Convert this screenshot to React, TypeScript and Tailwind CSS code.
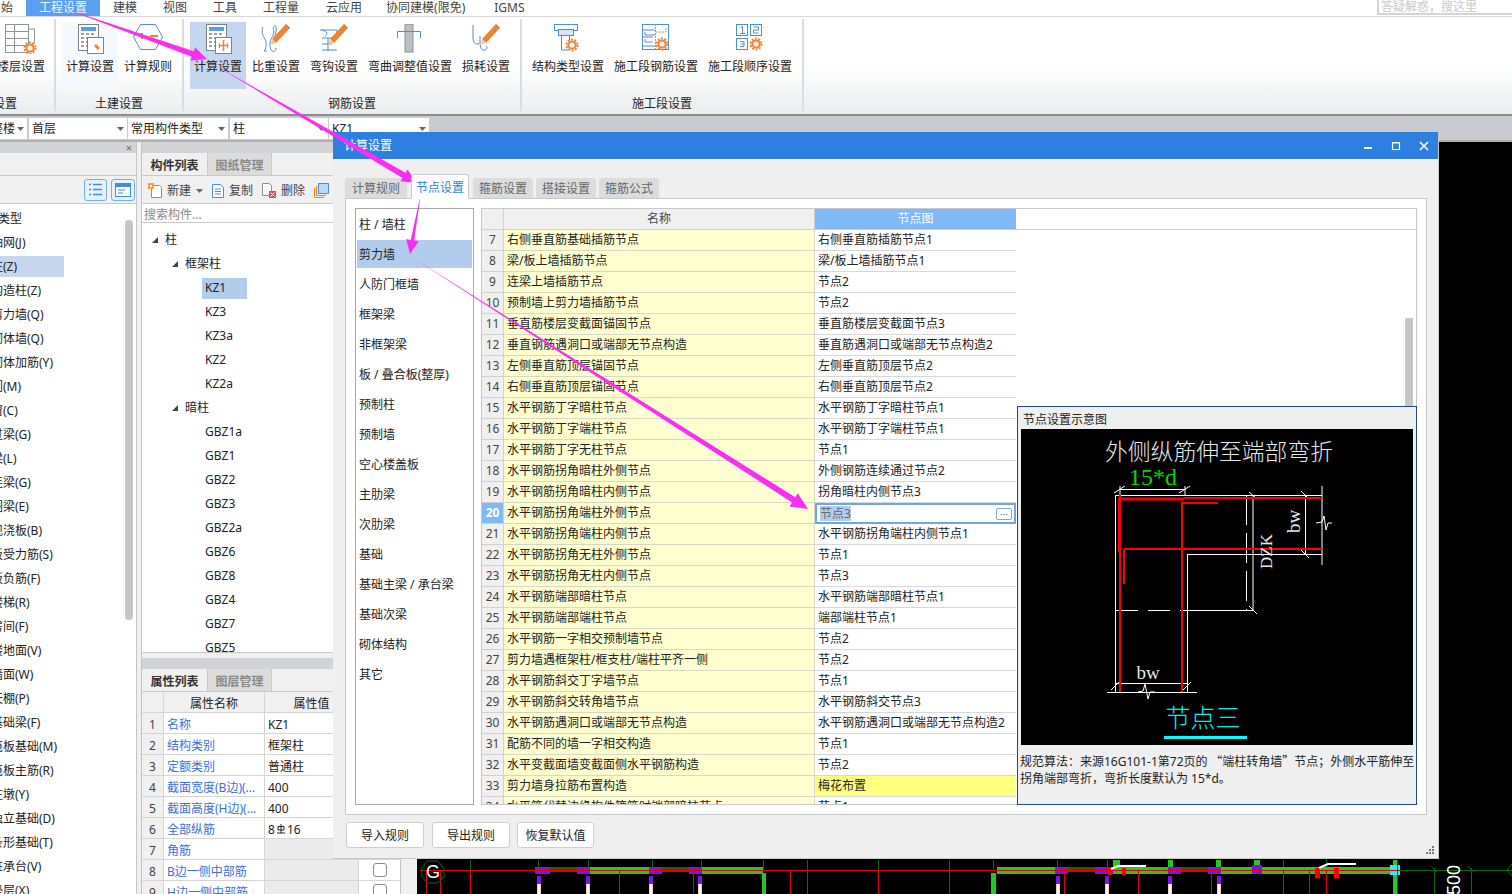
import type { ReactNode } from "react";

const MENU = [
  { label: "工程设置", className: "ml-[13px] w-[74px] justify-center bg-[#5a9ff0] text-[#eef5ff]" },
  { label: "建模", className: "ml-[13px]" },
  { label: "视图", className: "ml-[26px]" },
  { label: "工具", className: "ml-[26px]" },
  { label: "工程量", className: "ml-[26px]" },
  { label: "云应用", className: "ml-[27px]" },
  { label: "协同建模(限免)", className: "ml-[24px]" },
  { label: "IGMS", className: "ml-[29px]" },
];

const LEFT_ITEMS = [
  "轴网(J)", "柱(Z)", "构造柱(Z)", "剪力墙(Q)", "砌体墙(Q)", "砌体加筋(Y)", "门(M)", "窗(C)", "过梁(G)", "梁(L)",
  "连梁(G)", "圈梁(E)", "现浇板(B)", "板受力筋(S)", "板负筋(F)", "楼梯(R)", "房间(F)", "楼地面(V)", "墙面(W)", "天棚(P)",
  "基础梁(F)", "筏板基础(M)", "筏板主筋(R)", "柱墩(Y)", "独立基础(D)", "条形基础(T)", "桩承台(V)", "垫层(X)",
];

const TREE_A = ["KZ1", "KZ3", "KZ3a", "KZ2", "KZ2a"];
const TREE_B = ["GBZ1a", "GBZ1", "GBZ2", "GBZ3", "GBZ2a", "GBZ6", "GBZ8", "GBZ4", "GBZ7", "GBZ5"];

const PROPS = [
  ["名称", "KZ1"],
  ["结构类别", "框架柱"],
  ["定额类别", "普通柱"],
  ["截面宽度(B边)(...", "400"],
  ["截面高度(H边)(...", "400"],
  ["全部纵筋", "8|16"],
  ["角筋", ""],
  ["B边一侧中部筋", ""],
  ["H边一侧中部筋", ""],
];

const CATEGORIES = [
  "柱 / 墙柱", "剪力墙", "人防门框墙", "框架梁", "非框架梁", "板 / 叠合板(整厚)", "预制柱", "预制墙",
  "空心楼盖板", "主肋梁", "次肋梁", "基础", "基础主梁 / 承台梁", "基础次梁", "砌体结构", "其它",
];

const ROWS = [
  [7, "右侧垂直筋基础插筋节点", "右侧垂直筋插筋节点1"],
  [8, "梁/板上墙插筋节点", "梁/板上墙插筋节点1"],
  [9, "连梁上墙插筋节点", "节点2"],
  [10, "预制墙上剪力墙插筋节点", "节点2"],
  [11, "垂直筋楼层变截面锚固节点", "垂直筋楼层变截面节点3"],
  [12, "垂直钢筋遇洞口或端部无节点构造", "垂直筋遇洞口或端部无节点构造2"],
  [13, "左侧垂直筋顶层锚固节点", "左侧垂直筋顶层节点2"],
  [14, "右侧垂直筋顶层锚固节点", "右侧垂直筋顶层节点2"],
  [15, "水平钢筋丁字暗柱节点", "水平钢筋丁字暗柱节点1"],
  [16, "水平钢筋丁字端柱节点", "水平钢筋丁字端柱节点1"],
  [17, "水平钢筋丁字无柱节点", "节点1"],
  [18, "水平钢筋拐角暗柱外侧节点", "外侧钢筋连续通过节点2"],
  [19, "水平钢筋拐角暗柱内侧节点", "拐角暗柱内侧节点3"],
  [20, "水平钢筋拐角端柱外侧节点", "节点3"],
  [21, "水平钢筋拐角端柱内侧节点", "水平钢筋拐角端柱内侧节点1"],
  [22, "水平钢筋拐角无柱外侧节点", "节点1"],
  [23, "水平钢筋拐角无柱内侧节点", "节点3"],
  [24, "水平钢筋端部暗柱节点", "水平钢筋端部暗柱节点1"],
  [25, "水平钢筋端部端柱节点", "端部端柱节点1"],
  [26, "水平钢筋一字相交预制墙节点", "节点2"],
  [27, "剪力墙遇框架柱/框支柱/端柱平齐一侧", "节点2"],
  [28, "水平钢筋斜交丁字墙节点", "节点1"],
  [29, "水平钢筋斜交转角墙节点", "水平钢筋斜交节点3"],
  [30, "水平钢筋遇洞口或端部无节点构造", "水平钢筋遇洞口或端部无节点构造2"],
  [31, "配筋不同的墙一字相交构造", "节点1"],
  [32, "水平变截面墙变截面侧水平钢筋构造", "节点2"],
  [33, "剪力墙身拉筋布置构造", "梅花布置"],
  [34, "水平筋代替边缘构件箍筋时端部暗柱节点", "节点1"],
] as const;

const BLUE = "#4a90d9";
const ORANGE = "#f08230";

function Gear({ x, y }: { x: number; y: number }) {
  return (
    <g>
      <circle cx={x} cy={y} r={5.5} fill="none" stroke={ORANGE} strokeWidth={2} strokeDasharray="2 1.45" />
      <circle cx={x} cy={y} r={3.6} fill="#fff" stroke={ORANGE} strokeWidth={2} />
    </g>
  );
}

function Pencil({ x, y }: { x: number; y: number }) {
  return (
    <g transform={`translate(${x} ${y})`}>
      <polygon points="15,0 19,4 6,18 2,14" fill={ORANGE} />
      <polygon points="2,14 6,18 0,20" fill="#f8c9a0" />
      <polygon points="16,-1 20,3 19,4 15,0" fill="#c96a20" />
    </g>
  );
}

function Calculator({ children }: { children: ReactNode }) {
  return (
    <svg width="30" height="30" viewBox="0 0 30 30">
      <rect x="3.5" y="0.5" width="20" height="26" fill="#fff" stroke="#7b8388" />
      <rect x="6" y="3" width="15" height="4" fill="#5b9de8" />
      {[9, 13, 17, 21].map((y) =>
        [6, 11, 16].map((x) => <rect key={`${x}-${y}`} x={x} y={y} width="3" height="2" fill="#9aa0a4" />),
      )}
      <rect x="12.5" y="13.5" width="16" height="16" fill="#fff" stroke={BLUE} />
      {children}
    </svg>
  );
}

function RibbonIcon({ name }: { name: string }) {
  if (name === "floor")
    return (
      <svg width="32" height="30" viewBox="0 0 32 30">
        <rect x="0.5" y="0.5" width="23" height="28" fill="#fff" stroke="#8f969b" />
        {[7, 14, 21].map((y) => (
          <line key={y} x1="0" x2="24" y1={y + 0.5} y2={y + 0.5} stroke="#8f969b" />
        ))}
        <line x1="9.5" x2="9.5" y1="0" y2="29" stroke="#8f969b" />
        <path d="M24 5h5.5v14" fill="none" stroke="#8f969b" />
        <Gear x={25} y={24} />
      </svg>
    );
  if (name === "calcA")
    return (
      <Calculator>
        <path d="M17 18l3 3 1-1 4 4-2 2-4-4 1-1-3-3z" fill={ORANGE} />
      </Calculator>
    );
  if (name === "calcB")
    return (
      <Calculator>
        <path d="M20.5 16v11M15.5 21.5h10" stroke={ORANGE} strokeWidth="1.6" fill="none" />
        <path d="M16.5 19v5M24.5 19v5" stroke={ORANGE} fill="none" />
      </Calculator>
    );
  if (name === "rule")
    return (
      <svg width="30" height="30" viewBox="0 0 30 30">
        <polygon points="7.5,0.5 22.5,0.5 29.5,13 22.5,25.5 7.5,25.5 0.5,13" fill="#fff" stroke={BLUE} />
        <path d="M9 9v6M6 12h6M17 12h8" stroke={ORANGE} strokeWidth="2" />
      </svg>
    );
  if (name === "weight")
    return (
      <svg width="30" height="30" viewBox="0 0 30 30">
        <path d="M2 3c-2 5 0 9 2 12s1 11-1 12M3 27h3M12 3c2 5 0 9-2 12s-1 11 1 12c2 1 4 0 4-3" fill="none" stroke={BLUE} />
        <path d="M13 2c4-1 2 8 0 12" fill="none" stroke={BLUE} />
        <Pencil x={9} y={1} />
      </svg>
    );
  if (name === "hook")
    return (
      <svg width="30" height="30" viewBox="0 0 30 30">
        <path d="M1 6h17v3M3 6c6 2 6 4 3 6M3 14h10M3 20h10M9 14v13M3 26h15" fill="none" stroke={BLUE} />
        <Pencil x={9} y={1} />
      </svg>
    );
  if (name === "bend")
    return (
      <svg width="30" height="30" viewBox="0 0 30 30">
        <rect x="10" y="0" width="8" height="28" fill="#b9bfc3" stroke="#8d9498" />
        <path d="M2.5 14V7.5h23V14" fill="none" stroke={BLUE} />
      </svg>
    );
  if (name === "loss")
    return (
      <svg width="30" height="30" viewBox="0 0 30 30">
        <path d="M2 1v12c0 6 3 9 6 6M9 12v6c0 6 2 9 5 8s2-4 1-4" fill="none" stroke={BLUE} />
        <Pencil x={9} y={1} />
      </svg>
    );
  if (name === "structure")
    return (
      <svg width="30" height="30" viewBox="0 0 30 30">
        <rect x="1.5" y="0.5" width="23" height="6" fill="#fff" stroke={BLUE} />
        <rect x="5.5" y="5.5" width="15" height="6" fill="#d5e5f8" stroke={BLUE} />
        <path d="M8.5 11.5v14.5H15M16.5 11.5v5" fill="#fff" stroke={BLUE} />
        <Gear x={19} y={21} />
      </svg>
    );
  if (name === "segment")
    return (
      <svg width="30" height="30" viewBox="0 0 30 30">
        <rect x="1.5" y="0.5" width="26" height="25" fill="#fff" stroke={BLUE} />
        <path d="M2 6h12M4 8v3h10M2 13h10M4 15v3h8M2 22h12" fill="none" stroke={BLUE} />
        <path d="M14.5 0v26M15 8h10V4" fill="none" stroke={ORANGE} strokeDasharray="2 1" />
        <Gear x={21} y={20} />
      </svg>
    );
  return (
    <svg width="30" height="30" viewBox="0 0 30 30">
      <rect x="1.5" y="0.5" width="11" height="11" fill="#fff" stroke={BLUE} />
      <rect x="15.5" y="0.5" width="11" height="11" fill="#fff" stroke={BLUE} />
      <rect x="1.5" y="14.5" width="11" height="11" fill="#fff" stroke={BLUE} />
      <path d="M5.5 3.5l2-1v7M5 9.5h5M18.5 3h5v3h-5v3h5M5 17.5h4v2.5H6m3 0v2.5H5" fill="none" stroke={BLUE} />
      <Gear x={21} y={20} />
    </svg>
  );
}

function RibbonItem({ label, icon, className }: { label: string; icon: string; className: string }) {
  return (
    <div className={`flex h-[67px] flex-col items-center pt-[2px] ${className}`}>
      <div className="flex h-[30px] w-[32px] justify-center">
        <RibbonIcon name={icon} />
      </div>
      <span className="mt-[5px] whitespace-nowrap leading-[16px]">{label}</span>
    </div>
  );
}

function RibbonGroup({ label, width, children, labelClass = "text-center" }: { label: string; width: string; children: ReactNode; labelClass?: string }) {
  return (
    <div className={`mt-[2px] h-[92px] shrink-0 border-r-2 border-[#dadcdd] ${width}`}>
      <div className="mt-[3px] flex">{children}</div>
      <div className={`mt-[7px] leading-[16px] whitespace-nowrap ${labelClass}`}>{label}</div>
    </div>
  );
}

function Combo({ text, className, textClass = "" }: { text: string; className: string; textClass?: string }) {
  return (
    <div className={`flex h-[21px] shrink-0 items-center justify-between overflow-hidden bg-white pl-[3px] pr-[3px] ${className}`}>
      <span className={`whitespace-nowrap leading-[21px] ${textClass}`}>{text}</span>
      <Caret />
    </div>
  );
}

function Caret() {
  return (
    <svg width="7" height="4" viewBox="0 0 7 4" className="shrink-0">
      <polygon points="0,0 7,0 3.5,4" fill="#666" />
    </svg>
  );
}

function Tri() {
  return (
    <svg width="6" height="6" viewBox="0 0 6 6" className="shrink-0">
      <polygon points="0,6 6,6 6,0" fill="#444" />
    </svg>
  );
}

function RebarGlyph() {
  return (
    <svg width="10" height="12" viewBox="0 0 10 12" className="mx-[1px] -mt-[2px] inline-block">
      <path d="M2 2.5h6v3.5h-6zM5 0v9M1 9h8" fill="none" stroke="#222" />
    </svg>
  );
}

function Arrow({ x1, y1, x2, y2, w, head }: { x1: number; y1: number; x2: number; y2: number; w: number; head: number }) {
  const len = Math.hypot(x2 - x1, y2 - y1);
  const ux = (x2 - x1) / len;
  const uy = (y2 - y1) / len;
  const bx = x2 - ux * head;
  const by = y2 - uy * head;
  const nx = -uy;
  const ny = ux;
  const pts = [
    [x1, y1],
    [bx + (nx * w) / 2, by + (ny * w) / 2],
    [bx + (nx * head) / 2.2, by + (ny * head) / 2.2],
    [x2, y2],
    [bx - (nx * head) / 2.2, by - (ny * head) / 2.2],
    [bx - (nx * w) / 2, by - (ny * w) / 2],
  ];
  return <polygon points={pts.map((p) => p.join(",")).join(" ")} fill="#fb2cf3" />;
}

function TopPanelTabs({ first, second }: { first: string; second: string }) {
  return (
    <div className="flex h-[23px] shrink-0 border-b border-[#c9c9c9] bg-[#f0f0f0] font-bold">
      <div className="flex w-[65px] items-center justify-center pt-[4px] text-[#333]">{first}</div>
      <div className="flex w-[65px] items-center justify-center border-x border-[#c9c9c9] bg-[#dcdcdc] pt-[4px] text-[#8a8a8a]">{second}</div>
    </div>
  );
}

function DrawingStrip() {
  const purple = [[535, 15], [577, 13], [649, 13], [689, 13], [1055, 13], [1095, 18], [1168, 13], [1208, 13]];
  const olive = [[550, 27], [662, 27], [1068, 27], [1181, 27]];
  const green = [[590, 59], [702, 61], [997, 58], [1113, 55], [1221, 169]];
  const duals = [537, 586, 649, 698, 1056, 1105, 1168, 1217];
  const darkTop = [470, 538, 588, 652, 701, 763, 807, 878, 949, 993, 1057, 1107, 1283, 1326];
  const redDown = [426, 440, 470, 619, 693, 790, 807, 878, 949, 1064, 1138, 1211, 1283, 1309, 1326];
  return (
    <svg viewBox="417 142 1095 752" className="block h-full w-full">
      {darkTop.map((x) => (
        <line key={x} x1={x + 0.5} x2={x + 0.5} y1="860" y2="871" stroke="#0b6b0b" />
      ))}
      {green.map(([x, w]) => (
        <rect key={x} x={x} y="867" width={w} height="7" fill="#22c922" />
      ))}
      {olive.map(([x, w]) => (
        <rect key={x} x={x} y="867" width={w} height="5" fill="#3f4d05" />
      ))}
      {[[762, 4], [991, 5], [1393, 5]].map(([x, w]) => (
        <rect key={x} x={x} y={x === 1393 ? 860 : 873} width={w} height="34" fill="#22c922" />
      ))}
      {[[1113, 7], [1168, 5], [1216, 5], [1254, 6]].map(([x, w]) => (
        <rect key={x} x={x} y="860" width={w} height="7" fill="#22c922" />
      ))}
      {duals.map((x) => (
        <g key={x}>
          <rect x={x} y="878" width="4" height="20" fill="#f4c4c4" />
          <rect x={x + 1} y="878" width="2" height="20" fill="#fff" />
          <rect x={x} y="876" width="4" height="8" fill="#8312e0" />
        </g>
      ))}
      {purple.map(([x, w]) => (
        <rect key={x} x={x} y="867" width={w} height="7" fill="#8312e0" />
      ))}
      <rect x="1252" y="865" width="10" height="9" fill="#8312e0" />
      <rect x="1390" y="865" width="10" height="10" fill="#3fe6f0" />
      <line x1="420" x2="1398" y1="870.5" y2="870.5" stroke="#e60000" />
      {redDown.map((x) => (
        <line key={x} x1={x + 0.5} x2={x + 0.5} y1="871" y2="894" stroke="#e60000" />
      ))}
      <line x1="1397.5" x2="1397.5" y1="860" y2="894" stroke="#e60000" />
      {[[1108, 4, 12], [1122, 4, 12], [1315, 5, 19], [1334, 5, 19]].map(([x, w, h]) => (
        <rect key={x} x={x} y="868" width={w} height={h / 2 + 1} fill="#f00" />
      ))}
      <path d="M1111 869l7-3h28M1319 868l9-4h28" fill="none" stroke="#fff" strokeWidth="2" />
      <line x1="1398" x2="1512" y1="870.5" y2="870.5" stroke="#0b6b0b" />
      <path d="M1434.5 868v26M1471.5 868v26M1431 866l6 6M1468 866l6 6M1512 864l-5 6 5 6" fill="none" stroke="#0b6b0b" />
      <polygon points="427,861 438,861 444,869 444,877 438,883 427,883 422,877 422,868" fill="none" stroke="#0b6b0b" />
      <text x="433" y="878" textAnchor="middle" fontSize="18" fill="#fff" fontFamily="Liberation Sans, sans-serif">G</text>
      <text transform="translate(1460 895) rotate(-90)" fontSize="18" fill="#fff" fontFamily="Liberation Sans, sans-serif">500</text>
    </svg>
  );
}

function NodeDiagram() {
  const serif = "Liberation Serif, serif";
  const cjk = "Noto Sans CJK SC, sans-serif";
  return (
    <svg viewBox="1021 429 392 316" width="392" height="316" className="block bg-black">
      <text x="1219" y="460" textAnchor="middle" fontSize="22.8" fill="#e8e8e8" fontFamily={cjk} fontWeight="300">外侧纵筋伸至端部弯折</text>
      <text x="1129" y="485" fontSize="24" fill="#00d800" fontFamily={serif}>15*d</text>
      <path
        d="M1116 495.5H1322M1322 486v79M1187 554.5H1322M1187.5 554V692M1115.5 495V692M1107 692.5H1197M1116 683.5H1187M1187 610.5H1253M1253 495V611M1305.5 495V554M1120 489.5H1185M1120 486v9M1185 486v9"
        fill="none"
        stroke="#fff"
        strokeWidth="1"
      />
      <path d="M1116 610.5H1187" fill="none" stroke="#fff" strokeDasharray="22 10" />
      <path d="M1246.5 495V610" fill="none" stroke="#fff" strokeDasharray="30 8" />
      <path d="M1114 493l11-7M1179 493l11-7M1249 492l8 7M1249 606l8 8M1301 491l8 8M1301 550l8 8M1111 690l8-8M1183 690l8-8" fill="none" stroke="#fff" />
      <path d="M1138 692l5-1 2-7 3 15 2-7h5M1316 523l6-1 2-6 2 14 2-7h4" fill="none" stroke="#fff" />
      <path d="M1120 495V692" stroke="#f00" strokeWidth="2" />
      <path d="M1119.5 498V552" stroke="#f00" strokeWidth="3" />
      <path d="M1118 499H1184" stroke="#f00" strokeWidth="3" />
      <path d="M1184 498H1322M1124 549H1322M1182 692V503H1218M1124 549V584" fill="none" stroke="#f00" strokeWidth="2" />
      <text x="1148" y="679" textAnchor="middle" fontSize="19" fill="#e8e8e8" fontFamily={serif}>bw</text>
      <text transform="translate(1300 533) rotate(-90)" fontSize="19" fill="#e8e8e8" fontFamily={serif}>bw</text>
      <text transform="translate(1272 569) rotate(-90)" fontSize="17" fill="#e8e8e8" fontFamily={serif}>DZK</text>
      <text x="1203" y="727" textAnchor="middle" fontSize="25" fill="#00f0f0" fontFamily={cjk} fontWeight="300">节点三</text>
      <rect x="1164" y="736" width="83" height="3" fill="#00ffff" />
    </svg>
  );
}

export default function App() {
  return (
    <div className="relative flex h-[894px] w-[1512px] flex-col overflow-hidden bg-[#f0f0f0] font-['Noto_Sans','Noto_Sans_CJK_SC',sans-serif] text-[12px] text-[#222]">
      {/* Menu */}
      <div className="flex h-[17px] shrink-0 border-b border-[#d8d8d8] bg-white leading-[16px] text-[#444]">
        <div className="flex w-[13px] justify-end overflow-hidden whitespace-nowrap">始</div>
        {MENU.map((m) => (
          <div key={m.label} className={`flex whitespace-nowrap ${m.className}`}>
            {m.label}
          </div>
        ))}
        <div className="ml-auto h-[15px] w-[135px] border-b-2 border-l-2 border-[#d4d4d4] pl-[2px] leading-[14px] text-[#c8c8c8]">
          答疑解惑，搜这里
        </div>
      </div>

      {/* Ribbon */}
      <div className="flex h-[97px] shrink-0 bg-[linear-gradient(#fff_0%,#fff_50%,#eaedee_100%)]">
        <RibbonGroup label="工程设置" width="w-[56px]" labelClass="-ml-[31px]">
          <RibbonItem label="楼层设置" icon="floor" className="-ml-[3px] w-[48px]" />
        </RibbonGroup>
        <RibbonGroup label="土建设置" width="w-[128px]">
          <RibbonItem label="计算设置" icon="calcA" className="ml-[6px] w-[56px] bg-[#f5f8fd]" />
          <RibbonItem label="计算规则" icon="rule" className="ml-[6px] w-[48px]" />
        </RibbonGroup>
        <RibbonGroup label="钢筋设置" width="w-[338px]">
          <RibbonItem label="计算设置" icon="calcB" className="ml-[6px] w-[56px] bg-[#c6d6ee]" />
          <RibbonItem label="比重设置" icon="weight" className="ml-[6px] w-[48px]" />
          <RibbonItem label="弯钩设置" icon="hook" className="ml-[10px] w-[48px]" />
          <RibbonItem label="弯曲调整值设置" icon="bend" className="ml-[10px] w-[84px]" />
          <RibbonItem label="损耗设置" icon="loss" className="ml-[10px] w-[48px]" />
        </RibbonGroup>
        <RibbonGroup label="施工段设置" width="w-[282px]">
          <RibbonItem label="结构类型设置" icon="structure" className="ml-[10px] w-[72px]" />
          <RibbonItem label="施工段钢筋设置" icon="segment" className="ml-[10px] w-[84px]" />
          <RibbonItem label="施工段顺序设置" icon="order" className="ml-[10px] w-[84px]" />
        </RibbonGroup>
      </div>

      {/* Floor and component selectors */}
      <div className="flex h-[28px] shrink-0 items-start gap-[1px] border-y-2 border-y-[#8a8d90] border-b-[#aeb0b3] bg-[#c9cbd0] pt-[2px]">
        <Combo text="整楼" className="w-[27px]" textClass="-ml-[12px]" />
        <Combo text="首层" className="ml-[1px] w-[98px]" />
        <Combo text="常用构件类型" className="w-[100px]" />
        <Combo text="柱" className="ml-[1px] w-[98px]" />
        <Combo text="KZ1" className="w-[100px]" />
      </div>

      {/* Work area */}
      <div className="flex min-h-0 flex-1">
        {/* Component type tree */}
        <div className="flex w-[137px] shrink-0 flex-col border-r border-[#c4c4c4]">
          <div className="flex h-[11px] shrink-0 items-center justify-end bg-[#d2d3d7] pr-[4px] text-[11px] leading-[11px] text-[#666]">×</div>
          <div className="h-[23px] shrink-0 border-b border-[#c9c9c9]" />
          <div className="flex h-[28px] shrink-0 items-center justify-end gap-[4px] border-b border-[#c9c9c9] pr-[1px]">
            <div className="flex h-[22px] w-[23px] items-center justify-center rounded-[3px] border border-[#6fb0f0] bg-[#e6f1fc]">
              <svg width="13" height="13" viewBox="0 0 13 13">
                <path d="M0 1.5h2M4 1.5h9M0 6.5h2M4 6.5h9M0 11.5h2M4 11.5h9" stroke="#3d8fe0" strokeWidth="1.4" />
              </svg>
            </div>
            <div className="flex h-[22px] w-[24px] items-center justify-center rounded-[3px] border border-[#6fb0f0] bg-[#e6f1fc]">
              <svg width="16" height="14" viewBox="0 0 16 14">
                <rect x="0.5" y="0.5" width="15" height="13" fill="#fff" stroke="#3d8fe0" />
                <rect x="0" y="0" width="16" height="4" fill="#3d8fe0" />
                <path d="M3 7h7M3 10h5" stroke="#3d8fe0" />
              </svg>
            </div>
          </div>
          <div className="relative min-h-0 flex-1 overflow-hidden bg-white pt-[2px]">
            <div className="absolute right-[3px] top-[16px] h-[400px] w-[8px] rounded-full bg-[#c6c6c6]" />
            <div className="-ml-[26px] h-[24px] whitespace-nowrap leading-[26px]">构件类型</div>
            {LEFT_ITEMS.map((item) => (
              <div key={item} className="flex h-[24px] items-center">
                <span className={`-ml-[9px] h-[21px] whitespace-nowrap leading-[21px] ${item === "柱(Z)" ? "w-[73px] bg-[#c6d6ee]" : ""}`}>{item}</span>
              </div>
            ))}
          </div>
        </div>

        {/* Component list and properties */}
        <div className="ml-[4px] flex w-[260px] shrink-0 flex-col border-x border-[#c4c4c4]">
          <div className="h-[11px] shrink-0 bg-[#d2d3d7]" />
          <TopPanelTabs first="构件列表" second="图纸管理" />
          <div className="flex h-[28px] shrink-0 items-center border-b border-[#c9c9c9] pl-[6px] pt-[2px] text-[#444]">
            <svg width="15" height="15" viewBox="0 0 15 15">
              <path d="M3.5 2.5h8l2 2v10h-10z" fill="#fff" stroke="#8a9298" />
              <rect x="0" y="0" width="6" height="6" fill="#f6a23c" />
              <rect x="2" y="2" width="2" height="2" fill="#fff" />
            </svg>
            <span className="ml-[4px]">新建</span>
            <span className="ml-[5px]"><Caret /></span>
            <svg width="12" height="15" viewBox="0 0 12 15" className="ml-[9px]">
              <path d="M0.5 1.5h8l3 3v10h-11z" fill="#fff" stroke="#4a90d9" />
              <path d="M3 6h6M3 8.5h6M3 11h6" stroke="#4a90d9" />
            </svg>
            <span className="ml-[5px]">复制</span>
            <svg width="14" height="15" viewBox="0 0 14 15" className="ml-[9px]">
              <path d="M0.5 0.5h7l2 2v10h-9z" fill="#fff" stroke="#8a9298" />
              <rect x="7" y="8" width="7" height="7" fill="#e0504a" />
              <path d="M8.5 9.5l4 4M12.5 9.5l-4 4" stroke="#fff" />
            </svg>
            <span className="ml-[5px]">删除</span>
            <svg width="15" height="15" viewBox="0 0 15 15" className="ml-[9px]">
              <path d="M0.5 5v9.5H10" fill="none" stroke={ORANGE} />
              <path d="M2.5 3v9.5H12" fill="none" stroke={ORANGE} />
              <rect x="4.5" y="0.5" width="10" height="10" fill="#bcd6f6" stroke="#4a90d9" />
            </svg>
          </div>
          <div className="h-[19px] shrink-0 border-b border-[#c9c9c9] bg-white pl-[2px] leading-[21px] text-[#8a8a8a]">搜索构件...</div>
          <div className="h-[430px] shrink-0 overflow-hidden border-b border-[#c9c9c9] bg-white pt-[5px]">
            <div className="flex h-[24px] items-center gap-[7px] pl-[10px]"><Tri />柱</div>
            <div className="flex h-[24px] items-center gap-[7px] pl-[30px]"><Tri />框架柱</div>
            {TREE_A.map((t) => (
              <div key={t} className="flex h-[24px] items-center pl-[60px]">
                <span className={`flex h-[21px] w-[45px] items-center pl-[3px] ${t === "KZ1" ? "bg-[#b2ccee]" : ""}`}>{t}</span>
              </div>
            ))}
            <div className="flex h-[24px] items-center gap-[7px] pl-[30px]"><Tri />暗柱</div>
            {TREE_B.map((t) => (
              <div key={t} className="flex h-[24px] items-center pl-[63px]">{t}</div>
            ))}
          </div>
          <div className="h-[5px] shrink-0" />
          <div className="h-[11px] shrink-0 bg-[#d2d3d7]" />
          <TopPanelTabs first="属性列表" second="图层管理" />
          <div className="flex h-[21px] shrink-0 border-b border-[#d5d5d5] bg-[#f0f0f0] leading-[23px]">
            <div className="w-[22px] border-r border-[#d5d5d5]" />
            <div className="w-[101px] border-r border-[#d5d5d5] text-center">属性名称</div>
            <div className="w-[94px] border-r border-[#d5d5d5] text-center">属性值</div>
            <div className="flex-1" />
          </div>
          {PROPS.map(([name, value], i) => (
            <div key={name} className="flex h-[21px] shrink-0 border-b border-[#d5d5d5] bg-white leading-[23px]">
              <div className="w-[22px] border-r border-[#d5d5d5] bg-[#f0f0f0] text-center text-[#444]">{i + 1}</div>
              <div className="w-[101px] overflow-hidden whitespace-nowrap border-r border-[#d5d5d5] pl-[3px] text-[#3a6fe0]">{name}</div>
              <div className={`w-[94px] border-r border-[#d5d5d5] pl-[3px] ${i > 5 ? "bg-[#ebebeb]" : ""}`}>
                {value.includes("|") ? (
                  <>
                    8<RebarGlyph />16
                  </>
                ) : (
                  value
                )}
              </div>
              <div className="flex flex-1 items-center justify-center">
                {i > 5 && <div className="h-[14px] w-[14px] rounded-[3px] border border-[#8a8a8a]" />}
              </div>
            </div>
          ))}
        </div>

        <div className="ml-[16px] min-w-0 flex-1 bg-black">
          <DrawingStrip />
        </div>
      </div>

      {/* Floating settings dialog */}
      <div className="absolute left-[333px] top-[132px] flex h-[727px] w-[1106px] flex-col border-r border-b border-[#c6c6c6] bg-[#efefef]">
        <div className="flex h-[27px] shrink-0 items-center justify-between bg-[#2d7fe0] pl-[11px] pr-[9px] text-white">
          <span>计算设置</span>
          <div className="flex items-center gap-[18px]">
            <svg width="10" height="10" viewBox="0 0 10 10">
              <rect x="1" y="6" width="8" height="2" fill="#fff" />
            </svg>
            <svg width="10" height="10" viewBox="0 0 10 10">
              <path d="M1.5 1.5h7v7h-7z M1 2h8" fill="none" stroke="#fff" strokeWidth="1.2" />
            </svg>
            <svg width="10" height="10" viewBox="0 0 10 10">
              <path d="M1 1l8 8M9 1l-8 8" stroke="#fff" strokeWidth="1.6" />
            </svg>
          </div>
        </div>

        <div className="flex h-[39px] shrink-0 items-end pl-[12px] text-[#666]">
          <div className="flex h-[20px] w-[62px] items-center justify-center rounded-t-[3px] bg-[#dcdcdc] pt-[2px]">计算规则</div>
          <div className="relative z-10 -mb-[1px] ml-[4px] flex h-[25px] w-[58px] items-center justify-center rounded-t-[3px] border border-b-0 border-[#c6c8cc] bg-white pt-[2px] text-[#2d7fe0]">节点设置</div>
          <div className="ml-[4px] flex h-[20px] w-[60px] items-center justify-center rounded-t-[3px] bg-[#dcdcdc] pt-[2px]">箍筋设置</div>
          <div className="ml-[3px] flex h-[20px] w-[60px] items-center justify-center rounded-t-[3px] bg-[#dcdcdc] pt-[2px]">搭接设置</div>
          <div className="ml-[3px] flex h-[20px] w-[60px] items-center justify-center rounded-t-[3px] bg-[#dcdcdc] pt-[2px]">箍筋公式</div>
        </div>

        <div className="relative ml-[12px] flex h-[617px] w-[1082px] gap-[7px] border border-[#c6c8cc] bg-white py-[9px] pl-[9px] pr-[9px]">
          <div className="w-[119px] shrink-0 border border-[#a9a9a9] pl-[1px] pr-[1px] pt-[1px]">
            {CATEGORIES.map((c) => (
              <div key={c} className={`mb-[2px] flex h-[28px] items-center whitespace-nowrap pl-[2px] pt-[2px] ${c === "剪力墙" ? "bg-[#b2ccee]" : ""}`}>
                {c}
              </div>
            ))}
          </div>

          <div className="relative min-w-0 flex-1 overflow-hidden border border-[#c6c8cc]">
            <div className="flex h-[21px] border-b border-[#d0d0d0] leading-[20px]">
              <div className="w-[22px] border-r border-[#d0d0d0] bg-[#f0f0f0]" />
              <div className="w-[311px] border-r border-[#d0d0d0] bg-[#f0f0f0] text-center text-[#444]">名称</div>
              <div className="w-[201px] bg-[#7fb9f7] text-center text-white">节点图</div>
            </div>
            {ROWS.map(([n, name, node]) => (
              <div key={n} className="flex h-[21px] leading-[20px]">
                <div className={`w-[22px] border-b border-r border-[#d0d0d0] text-center ${n === 20 ? "bg-[#7fb9f7] font-bold text-white" : "bg-[#f0f0f0] text-[#444]"}`}>{n}</div>
                <div className="w-[311px] border-b border-r border-[#d8d8c8] bg-[#ffffcf] pl-[3px] whitespace-nowrap">{name}</div>
                {n === 20 ? (
                  <div className="flex w-[201px] items-center justify-between border-2 border-[#6ea8e4] pl-[3px] pr-[2px] text-[#666]">
                    <span className="bg-[#b2ccee] leading-[15px]">{node}</span>
                    <span className="flex h-[12px] w-[16px] items-center justify-center rounded-[2px] border border-[#7fa9d6] text-[10px] leading-[8px] text-[#4a7fc0]">···</span>
                  </div>
                ) : (
                  <div className={`w-[201px] border-b border-[#d8d8d8] pl-[3px] whitespace-nowrap ${n === 33 ? "bg-[#ffff80]" : ""}`}>{node}</div>
                )}
              </div>
            ))}
            <div className="absolute right-[3px] top-[109px] h-[120px] w-[8px] bg-[#c6c6c6]" />
          </div>

          {/* Preview window */}
          <div className="absolute left-[671px] top-[207px] flex h-[399px] w-[400px] flex-col border border-[#1f4a86] bg-[#efefef]">
            <div className="h-[22px] shrink-0 pl-[5px] leading-[25px]">节点设置示意图</div>
            <div className="ml-[3px]">
              <NodeDiagram />
            </div>
            <div className="mt-[7px] whitespace-nowrap pl-[2px] leading-[17px]">
              规范算法：来源16G101-1第72页的
              <span className="font-['Noto_Sans_CJK_SC']"> “端柱转角墙”</span>
              节点；外侧水平筋伸至
              <br />
              拐角端部弯折，弯折长度默认为 15*d。
            </div>
          </div>
        </div>

        <div className="ml-[13px] mt-[7px] flex gap-[8px]">
          <div className="flex h-[26px] w-[78px] items-center justify-center rounded-[3px] border border-[#d0d0d0] bg-white pt-[1px]">导入规则</div>
          <div className="flex h-[26px] w-[78px] items-center justify-center rounded-[3px] border border-[#d0d0d0] bg-white pt-[1px]">导出规则</div>
          <div className="ml-[-1px] flex h-[26px] w-[77px] items-center justify-center rounded-[3px] border border-[#d0d0d0] bg-white pt-[1px]">恢复默认值</div>
        </div>

        <svg width="10" height="10" viewBox="0 0 10 10" className="absolute bottom-[3px] right-[3px]">
          <path d="M7 1h2v2H7zM4 4h2v2H4zM7 4h2v2H7zM1 7h2v2H1zM4 7h2v2H4zM7 7h2v2H7z" fill="#777" />
        </svg>
      </div>

      {/* Annotation arrows drawn over the screenshot */}
      <svg className="pointer-events-none absolute left-0 top-0" width="1512" height="894" viewBox="0 0 1512 894">
        <Arrow x1={66} y1={9} x2={207} y2={59} w={6} head={15} />
        <Arrow x1={213} y1={64} x2={417} y2={183} w={6} head={15} />
        <Arrow x1={421} y1={193} x2={410} y2={254} w={3.5} head={14} />
        <Arrow x1={410} y1={256} x2={808} y2={509} w={6} head={17} />
      </svg>
    </div>
  );
}
